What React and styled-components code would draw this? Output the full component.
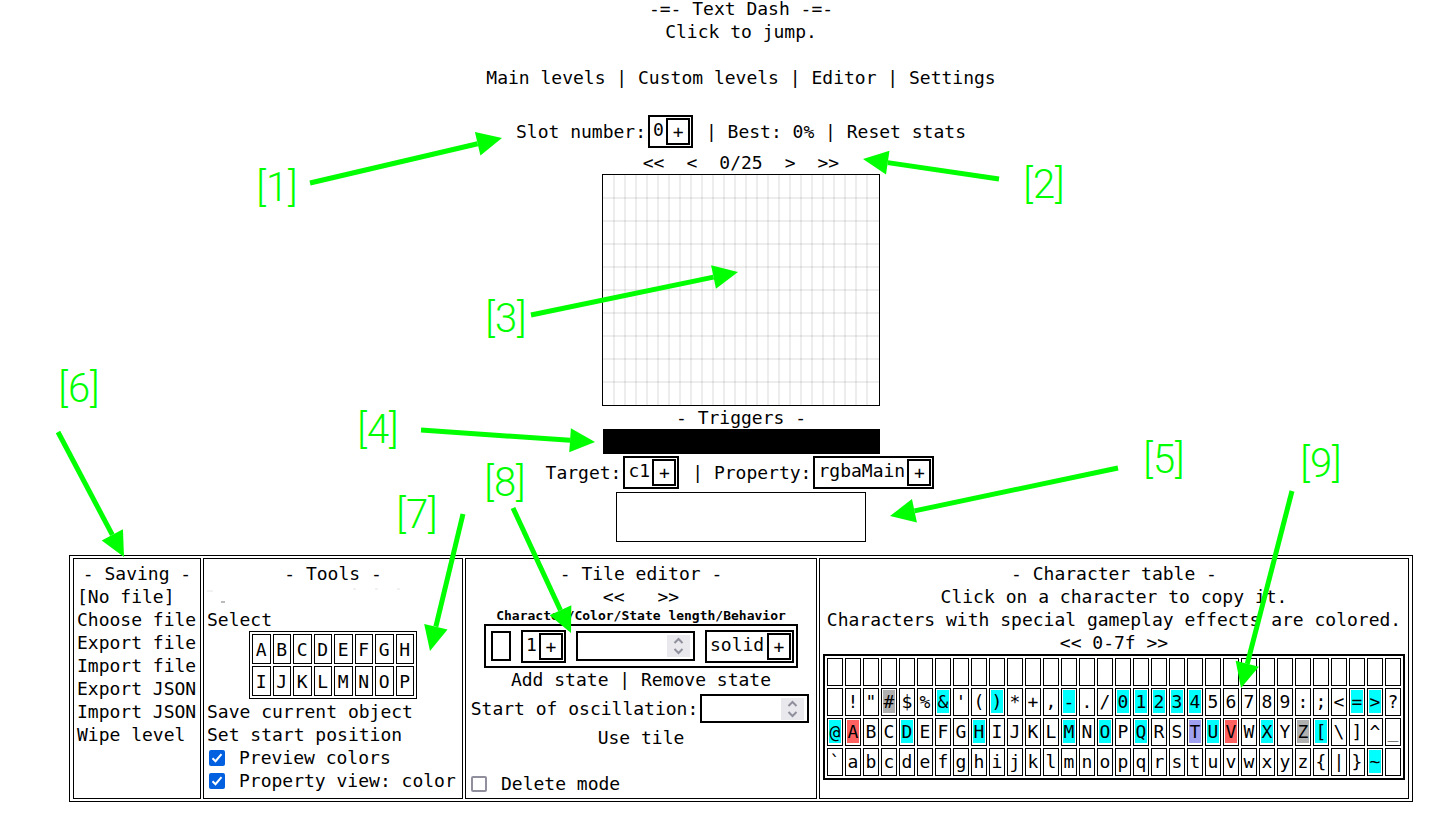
import React from "react";
import styled, { createGlobalStyle } from "styled-components";

const GlobalStyle = createGlobalStyle`
  *, *::before, *::after { box-sizing: border-box; }
  body {
    margin: 0;
    background: #fff;
    color: #000;
    font: 18px/23px "DejaVu Sans Mono", "Liberation Mono", monospace;
  }
  button, input, select, textarea {
    margin: 0;
    padding: 0;
    border: 0;
    border-radius: 0;
    background: none;
    color: inherit;
    font: inherit;
  }
`;

const Page = styled.main`
  position: relative;
  display: flex;
  flex-direction: column;
  align-items: center;
  margin-top: -3px;
  padding: 0 21px 24px 69px;
`;

const Line = styled.div`
  display: flex;
  justify-content: center;
  align-items: center;
  gap: ${(p) => p.$gap || 0}px;
  min-height: 23px;
  white-space: pre;
`;

const Title = styled.h1`
  margin: 0;
  font: inherit;
  white-space: pre;
`;

const Nav = styled.nav`
  display: flex;
  white-space: pre;
  margin: 23px 0;
`;

const Link = styled.a`
  color: inherit;
  text-decoration: none;
`;

const TextButton = styled.button`
  cursor: pointer;
  white-space: pre;
  text-align: left;
`;

const ControlRow = styled.div`
  display: flex;
  align-items: center;
  min-height: ${(p) => p.$height}px;
  white-space: pre;
`;

const Picker = styled.span`
  display: inline-flex;
  align-items: flex-start;
  height: 33px;
  margin: 0 2px;
  padding: 1px 1px 1px 3px;
  border: 2px solid #000;
`;

const PickerSelect = styled.select`
  appearance: none;
  height: 23px;
  margin-right: 2px;
`;

const PlusButton = styled.button`
  width: 24px;
  height: 27px;
  border: 2px solid #000;
  text-align: center;
`;

const LevelGrid = styled.div`
  width: 278px;
  height: 232px;
  border: 1px solid #000;
  svg { display: block; }
`;

const TriggerBar = styled.div`
  width: 277px;
  height: 25px;
  background: #000;
`;

const TriggerValue = styled.textarea`
  width: 250px;
  height: 50px;
  margin: 1px 0 13px;
  border: 1px solid #000;
  resize: none;
`;

const Panels = styled.div`
  display: grid;
  grid-template-columns: 128fr 260fr 352fr 590fr;
  gap: 2px;
  width: 100%;
  min-height: 247px;
  padding: 2px 3px;
  border: 1px solid #000;
`;

const Panel = styled.section`
  display: flex;
  flex-direction: column;
  align-items: ${(p) => p.$align || "center"};
  min-width: 0;
  padding: 3px;
  border: 1px solid #000;
  white-space: pre;
`;

const PanelTitle = styled.h2`
  margin: 0;
  align-self: center;
  font: inherit;
`;

const Smudges = styled.svg`
  display: block;
  height: 23px;
  width: 200px;
`;

const SlotTable = styled.table`
  align-self: center;
  width: 168px;
  border: 1px solid #000;
  border-spacing: 2px;
  table-layout: fixed;
  margin-bottom: 1px;
`;

const SlotCell = styled.td`
  height: 30px;
  padding: 0;
  border: 1px solid #000;
  text-align: center;
`;

const CheckLabel = styled.label`
  display: flex;
  align-items: center;
  align-self: flex-start;
  height: 23px;
`;

const Check = styled.input`
  appearance: none;
  width: 16px;
  height: 16px;
  margin: 0 14px 0 2px;
  border: 2px solid #8f8f9d;
  border-radius: 2px;
  background: #fff;
  &:checked {
    border-color: #0060df;
    background: #0060df url("data:image/svg+xml,%3Csvg xmlns='http://www.w3.org/2000/svg' viewBox='0 0 12 12'%3E%3Cpath d='M1.5 6.2l3 3 6-7' fill='none' stroke='white' stroke-width='2'/%3E%3C/svg%3E") center / 12px no-repeat;
  }
`;

const StateCaption = styled.h3`
  margin: 0;
  font-size: 13px;
  line-height: 16px;
  font-weight: bold;
`;

const StateRow = styled.div`
  display: flex;
  align-items: center;
  gap: 6px;
  height: 44px;
  padding: 0 0 0 5px;
  border: 2px solid #000;
`;

const CharInput = styled.input`
  width: 20px;
  height: 30px;
  margin-right: 2px;
  border: 2px solid #000;
  text-align: center;
`;

const NumberBox = styled.span`
  display: flex;
  align-items: center;
  width: ${(p) => p.$width}px;
  height: ${(p) => p.$height}px;
  margin: 0 2px;
  padding-right: 3px;
  border: 2px solid #000;
`;

const NumberInput = styled.input`
  flex: 1;
  min-width: 0;
  height: 100%;
  padding: 0 3px;
  appearance: textfield;
  &::-webkit-inner-spin-button { display: none; }
`;

const Spinner = styled.svg`
  width: 23px;
  height: 22px;
  background: #e9e9ed;
`;

const CharTable = styled.table`
  border: 2px solid #000;
  border-spacing: 2px;
  table-layout: fixed;
  width: 582px;
`;

const CharCell = styled.td`
  height: 28px;
  padding: 1px 0;
  border: 1px solid #000;
  vertical-align: top;
`;

const CharButton = styled.button`
  display: block;
  width: 12px;
  height: 23px;
  margin: 0 auto;
  background: ${(p) => p.$color || "none"};
  white-space: pre;
`;

const Annotations = styled.svg`
  position: absolute;
  top: 3px;
  left: 0;
  pointer-events: none;
  overflow: visible;
  text {
    fill: #0f0;
    font: 300 40px Roboto, "Liberation Sans", sans-serif;
    text-anchor: middle;
  }
  line { stroke: #0f0; stroke-width: 5; }
  polygon { fill: #0f0; }
`;

const CYAN = "#00ffff";
const GRAY = "#b0b0b0";
const RED = "#ff6060";
const PURPLE = "#a0a0f0";

const effects = { "#": GRAY, Z: GRAY, A: RED, V: RED, T: PURPLE };
[..."&)-01234=>@DHMOQUX[~"].forEach((c) => { effects[c] = CYAN; });

const rows = [0, 32, 64, 96].map((start) =>
  Array.from({ length: 32 }, (_, i) => {
    const code = start + i;
    return code < 32 || code === 127 ? " " : String.fromCharCode(code);
  })
);

const notes = [
  { label: "[1]", at: [277, 201], from: [310, 183], to: [502, 138] },
  { label: "[2]", at: [1044, 198], from: [999, 179], to: [863, 159] },
  { label: "[3]", at: [506, 332], from: [531, 315], to: [738, 272] },
  { label: "[4]", at: [378, 443], from: [421, 430], to: [595, 442] },
  { label: "[5]", at: [1164, 473], from: [1118, 468], to: [890, 516] },
  { label: "[6]", at: [79, 402], from: [58, 432], to: [124, 557] },
  { label: "[7]", at: [417, 528], from: [463, 514], to: [430, 651] },
  { label: "[8]", at: [505, 496], from: [513, 508], to: [571, 633] },
  { label: "[9]", at: [1321, 477], from: [1292, 491], to: [1241, 688] },
];

function Arrow({ from, to }) {
  const dx = to[0] - from[0];
  const dy = to[1] - from[1];
  const len = Math.hypot(dx, dy);
  const ux = dx / len;
  const uy = dy / len;
  const bx = to[0] - ux * 25;
  const by = to[1] - uy * 25;
  return (
    <g>
      <line x1={from[0]} y1={from[1]} x2={bx} y2={by} />
      <polygon
        points={`${to[0]},${to[1]} ${bx - uy * 12},${by + ux * 12} ${bx + uy * 12},${by - ux * 12}`}
      />
    </g>
  );
}

function Dropdown({ label, value }) {
  return (
    <Picker>
      <PickerSelect aria-label={label} defaultValue={value}>
        <option>{value}</option>
      </PickerSelect>
      <PlusButton aria-label={`Next ${label}`}>+</PlusButton>
    </Picker>
  );
}

function NumberField({ id, label, width, height }) {
  return (
    <NumberBox $width={width} $height={height}>
      <NumberInput type="number" id={id} aria-label={label} />
      <Spinner viewBox="0 0 23 22" aria-hidden="true">
        <path d="M7.500 8l4-4 4 4M7.500 14l4 4 4-4" fill="none" stroke="#8f8f9d" strokeWidth="2" />
      </Spinner>
    </NumberBox>
  );
}

export default function App() {
  return (
    <>
      <GlobalStyle />
      <Page>
        <Title>-=- Text Dash -=-</Title>
        <Line>Click to jump.</Line>
        <Nav>
          <Link href="#main">Main levels</Link> | <Link href="#custom">Custom levels</Link> |{" "}
          <Link href="#editor">Editor</Link> | <Link href="#settings">Settings</Link>
        </Nav>
        <ControlRow $height={39}>
          Slot number:
          <Dropdown label="slot number" value="0" />
          {" | Best: 0% | "}
          <TextButton>Reset stats</TextButton>
        </ControlRow>
        <Line $gap={22}>
          <TextButton>{"<<"}</TextButton>
          <TextButton>{"<"}</TextButton>
          <span>0/25</span>
          <TextButton>{">"}</TextButton>
          <TextButton>{">>"}</TextButton>
        </Line>
        <LevelGrid>
          <svg width="276" height="230" stroke="#000" strokeOpacity="0.07" strokeWidth="2">
            {Array.from({ length: 24 }, (_, i) => (
              <line key={i} x1={(i + 1) * 11} x2={(i + 1) * 11} y1="0" y2="230" />
            ))}
            {Array.from({ length: 9 }, (_, i) => (
              <line key={i} x1="0" x2="276" y1={(i + 1) * 23} y2={(i + 1) * 23} />
            ))}
          </svg>
        </LevelGrid>
        <Line>- Triggers -</Line>
        <TriggerBar />
        <ControlRow $height={37}>
          Target:
          <Dropdown label="target" value="c1" />
          {" | Property:"}
          <Dropdown label="property" value="rgbaMain" />
        </ControlRow>
        <TriggerValue aria-label="Trigger value" />

        <Panels>
          <Panel $align="flex-start">
            <PanelTitle>- Saving -</PanelTitle>
            <Line>[No file]</Line>
            {["Choose file", "Export file", "Import file", "Export JSON", "Import JSON", "Wipe level"].map((t) => (
              <TextButton key={t}>{t}</TextButton>
            ))}
          </Panel>

          <Panel $align="flex-start">
            <PanelTitle>- Tools -</PanelTitle>
            <Smudges viewBox="0 0 200 23" aria-hidden="true">
              <path d="M14 17h4" stroke="#777" />
              <path d="M0 6h6M146 4h3M168 4h3M190 4h3" stroke="#e4e4e4" />
            </Smudges>
            <TextButton>Select</TextButton>
            <SlotTable>
              <tbody>
                {["ABCDEFGH", "IJKLMNOP"].map((r) => (
                  <tr key={r}>
                    {[...r].map((c) => (
                      <SlotCell key={c}><TextButton>{c}</TextButton></SlotCell>
                    ))}
                  </tr>
                ))}
              </tbody>
            </SlotTable>
            <TextButton>Save current object</TextButton>
            <TextButton>Set start position</TextButton>
            <CheckLabel><Check type="checkbox" defaultChecked />Preview colors</CheckLabel>
            <CheckLabel><Check type="checkbox" defaultChecked />Property view: color</CheckLabel>
          </Panel>

          <Panel>
            <PanelTitle>- Tile editor -</PanelTitle>
            <Line $gap={33}>
              <TextButton>{"<<"}</TextButton>
              <TextButton>{">>"}</TextButton>
            </Line>
            <StateCaption>Character/Color/State length/Behavior</StateCaption>
            <StateRow>
              <CharInput aria-label="Character" />
              <Dropdown label="color" value="1" />
              <NumberField label="State length" width={119} height={30} />
              <Dropdown label="behavior" value="solid" />
            </StateRow>
            <Line>
              <TextButton>Add state</TextButton> | <TextButton>Remove state</TextButton>
            </Line>
            <ControlRow $height={35}>
              <label htmlFor="oscillation">Start of oscillation:</label>
              <NumberField id="oscillation" width={109} height={29} />
            </ControlRow>
            <TextButton>Use tile</TextButton>
            <Line />
            <CheckLabel><Check type="checkbox" />Delete mode</CheckLabel>
          </Panel>

          <Panel>
            <PanelTitle>- Character table -</PanelTitle>
            <Line>Click on a character to copy it.</Line>
            <Line>Characters with special gameplay effects are colored.</Line>
            <Line>
              <TextButton>{"<<"}</TextButton> 0-7f <TextButton>{">>"}</TextButton>
            </Line>
            <CharTable>
              <tbody>
                {rows.map((row, r) => (
                  <tr key={r}>
                    {row.map((c, i) => (
                      <CharCell key={i}>
                        <CharButton $color={effects[c]} aria-label={`Character ${r * 32 + i}`}>{c}</CharButton>
                      </CharCell>
                    ))}
                  </tr>
                ))}
              </tbody>
            </CharTable>
          </Panel>
        </Panels>

        <Annotations width="1434" height="700" aria-hidden="true">
          {notes.map((n) => (
            <g key={n.label}>
              <text x={n.at[0]} y={n.at[1]}>{n.label}</text>
              <Arrow from={n.from} to={n.to} />
            </g>
          ))}
        </Annotations>
      </Page>
    </>
  );
}
